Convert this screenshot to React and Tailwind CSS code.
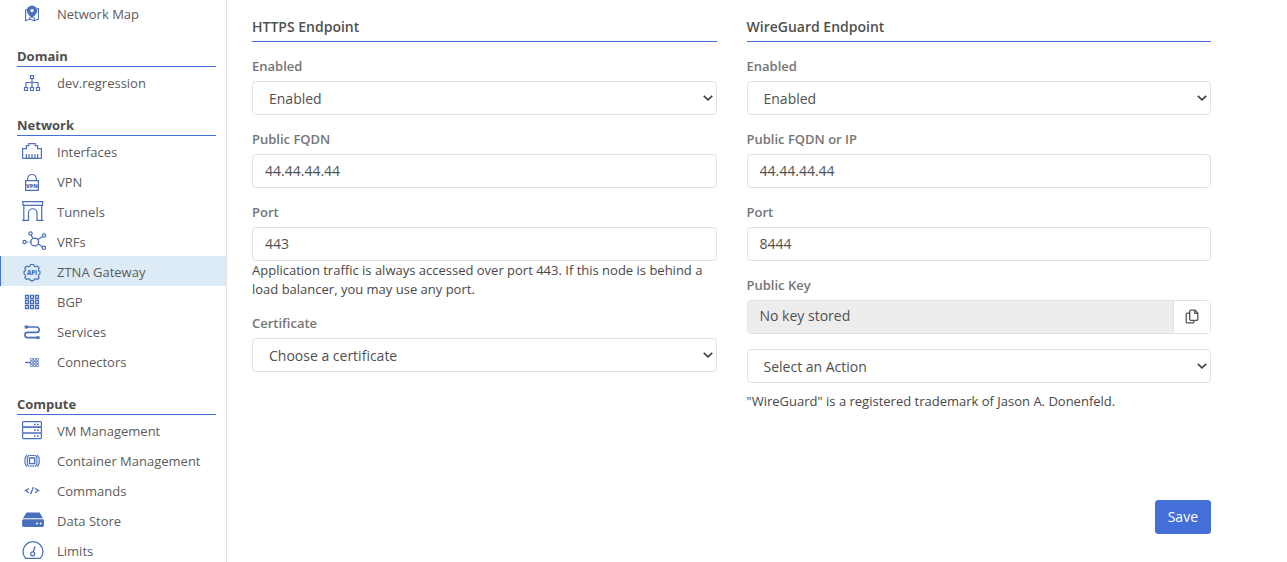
import React from "react";

/* Every sidebar glyph is drawn on the same 30 x 30 grid. */
function Glyph({ children }) {
  return (
    <svg
      viewBox="0 0 30 30"
      className="size-[30px] shrink-0 text-[#4a6fbd]"
      fill="none"
      stroke="currentColor"
      strokeWidth="1.2"
      aria-hidden="true"
    >
      {children}
    </svg>
  );
}

const glyphs = {
  map: (
    <Glyph>
      <path d="M10 11.500 8.600 12v10.700l4.200-1.600 4.400 1.600 4.200-1.600V10.500L20 11M12.800 19v2.600M17.200 19v4.200" strokeWidth="1.100" />
      <path
        d="M15 7.500a5.200 5.200 0 0 0-5.200 5.200c0 3 3.200 5.200 5.200 7.600 2-2.400 5.200-4.600 5.200-7.600A5.200 5.200 0 0 0 15 7.500zm0 3.400a1.700 1.700 0 1 1 0 3.400 1.700 1.700 0 0 1 0-3.400z"
        fill="currentColor"
        stroke="none"
      />
    </Glyph>
  ),
  tree: (
    <Glyph>
      <path d="M13.500 8.500h3v3h-3zM15 11.500v9M9 20.500v-5h12v5M7.500 20.500h3v3h-3zM13.500 20.500h3v3h-3zM19.500 20.500h3v3h-3z" />
    </Glyph>
  ),
  ethernet: (
    <Glyph>
      <path d="M5.600 22.400V12.600h3.800V9.700h2.400V7.600h6.400v2.100h2.400v2.900h3.800v9.800zM9.300 18v4.400M12.100 18v4.400M15 18v4.400M17.900 18v4.400M20.700 18v4.400" />
    </Glyph>
  ),
  lock: (
    <Glyph>
      <path d="M8.600 14.600h12.800v9.800H8.600zM10.700 14.600v-1.800a4.300 4.300 0 0 1 8.600 0v1.800" />
      <text x="15" y="21.800" fontSize="5.500" fontWeight="800" textAnchor="middle" fill="currentColor" stroke="none">
        VPN
      </text>
    </Glyph>
  ),
  arch: (
    <Glyph>
      <path d="M5 5.600h21.500M6 5.600v3.800h19.500V5.600M6.800 9.400v14.800M24.700 9.400v14.800M5 24.400h6.500V17a4.200 4.200 0 0 1 8.500 0v7.400h6.500" />
    </Glyph>
  ),
  hub: (
    <Glyph>
      <circle cx="17.700" cy="16" r="3.900" strokeWidth="1.400" />
      <circle cx="7.500" cy="16" r="1.600" />
      <circle cx="13.500" cy="7.500" r="1.700" />
      <circle cx="27" cy="9.500" r="1.600" />
      <circle cx="26.800" cy="21.800" r="1.700" />
      <path d="M9.500 16h1.800M12.400 16h1.400M14.200 9.200l1.700 3.300M21 13.600l4.600-3.100M21.200 18.100l4.200 2.700" />
    </Glyph>
  ),
  gear: (
    <Glyph>
      <path
        d="M13.400 8.500h3.200l.5 1.700 1.500.6 1.600-.8 2 2-.8 1.600.6 1.500 1 .5v2.200l-1 .6-.6 1.500.8 1.600-2 2-1.600-.8-1.500.6-.5 1.400h-3.200l-.5-1.400-1.500-.6-1.600.8-2-2 .8-1.600-.6-1.500-1-.6v-2.200l1-.5.6-1.500-.8-1.600 2-2 1.600.8 1.500-.6z"
        strokeLinejoin="round"
      />
      <text x="15" y="18.500" fontSize="6" fontWeight="800" textAnchor="middle" fill="currentColor" stroke="none">
        API
      </text>
    </Glyph>
  ),
  grid: (
    <Glyph>
      <path
        d="M8.500 9.500h3v3h-3zM13.500 9.500h3v3h-3zM18.500 9.500h3v3h-3zM8.500 14.500h3v3h-3zM13.500 14.500h3v3h-3zM18.500 14.500h3v3h-3zM8.500 19.500h3v3h-3zM13.500 19.500h3v3h-3zM18.500 19.500h3v3h-3z"
        strokeWidth="1.300"
      />
    </Glyph>
  ),
  route: (
    <Glyph>
      <path d="M9.500 11h10a2.700 2.700 0 0 1 0 5.400h-9a2.600 2.600 0 0 0 0 5.200h10" strokeWidth="1.600" />
      <path d="M7.700 9.600h3.200v2.800H7.700zM19.400 20.200h3.200v2.800h-3.200z" fill="currentColor" stroke="none" />
    </Glyph>
  ),
  connector: (
    <Glyph>
      <path d="M8 16.500h6" strokeWidth="1.300" />
      <path
        d="M13.500 12.500h2v2h-2zM16.500 12.500h2v2h-2zM19.500 12.500h2v2h-2zM13.500 15.500h2v2h-2zM16.500 15.500h2v2h-2zM19.500 15.500h2v2h-2zM13.500 18.500h2v2h-2zM16.500 18.500h2v2h-2zM19.500 18.500h2v2h-2z"
        strokeWidth=".7"
      />
    </Glyph>
  ),
  rack: (
    <Glyph>
      <rect x="5.600" y="6.600" width="18.800" height="5.600" rx="1" />
      <rect x="5.600" y="12.200" width="18.800" height="5.800" rx="1" />
      <rect x="5.600" y="18" width="18.800" height="5.600" rx="1" />
      <path d="M17 9.500h1.700M20 9.500h1.700M17 15.200h1.700M20 15.200h1.700M17 20.900h1.700M20 20.900h1.700" strokeWidth="1.500" />
    </Glyph>
  ),
  container: (
    <Glyph>
      <path d="M12.500 13h5.200v5.600h-5.200z" strokeWidth="1.400" />
      <path
        d="M12.500 10.500h5.200M12.500 21h5.200M12 10l-1.700 2.300v7l1.700 2.300M18.200 10l1.700 2.300v7l-1.700 2.300M9.700 9.800l-1.700 3.500v5l1.700 3.500M20.500 9.800l1.700 3.500v5l-1.700 3.500"
        strokeWidth="1.100"
      />
    </Glyph>
  ),
  code: (
    <Glyph>
      <path d="M12 13.500 8.500 15.600 12 17.700M18 13.500l3.500 2.100-3.500 2.100M16.500 12l-3 7.200" strokeWidth="1.300" />
    </Glyph>
  ),
  drive: (
    <Glyph>
      <path d="M9.500 7.500h13L26 13.300H6zM6.500 14.200h19c.8 0 1.400.6 1.400 1.400v4.600c0 1.100-.8 1.900-1.900 1.900H7a1.900 1.900 0 0 1-1.900-1.900v-4.600c0-.8.600-1.400 1.400-1.400z" fill="currentColor" stroke="none" />
      <circle cx="20" cy="18.400" r="1" fill="#fff" stroke="none" />
      <circle cx="23.600" cy="18.400" r="1" fill="#fff" stroke="none" />
    </Glyph>
  ),
  gauge: (
    <Glyph>
      <path d="M8.600 23.400a10 10 0 1 1 14.800 0z" strokeWidth="1.300" strokeLinejoin="round" />
      <circle cx="15.700" cy="18.800" r="2" />
      <path d="M16.300 16.900 18 11.500" strokeWidth="1.400" />
    </Glyph>
  ),
};

const sections = [
  { title: "Domain", items: [["tree", "dev.regression"]] },
  {
    title: "Network",
    items: [
      ["ethernet", "Interfaces"],
      ["lock", "VPN"],
      ["arch", "Tunnels"],
      ["hub", "VRFs"],
      ["gear", "ZTNA Gateway"],
      ["grid", "BGP"],
      ["route", "Services"],
      ["connector", "Connectors"],
    ],
  },
  {
    title: "Compute",
    items: [
      ["rack", "VM Management"],
      ["container", "Container Management"],
      ["code", "Commands"],
      ["drive", "Data Store"],
      ["gauge", "Limits"],
    ],
  },
];

function NavItem({ icon, label, active }) {
  return (
    <li>
      <a
        href="#"
        aria-current={active ? "page" : undefined}
        className={
          "flex h-[30px] items-center gap-[10px] border-l pl-4 text-[13px] leading-5 text-[#5c5c5c] " +
          (active ? "border-[#446fd8] bg-[#dcebf5]" : "border-transparent")
        }
      >
        {glyphs[icon]}
        <span className="pt-px">{label}</span>
      </a>
    </li>
  );
}

function Sidebar() {
  return (
    <nav className="w-[227px] shrink-0 overflow-hidden border-r border-[#e3e3e3]">
      <ul className="-mt-[2px]">
        <NavItem icon="map" label="Network Map" />
      </ul>
      {sections.map((section) => (
        <section key={section.title}>
          <h2 className="mr-[10px] ml-[17px] flex h-[39px] items-end border-b border-[#446fd8] text-[13px] leading-5 font-bold text-[#4f4f4f]">
            {section.title}
          </h2>
          <ul>
            {section.items.map(([icon, label]) => (
              <NavItem key={label} icon={icon} label={label} active={label === "ZTNA Gateway"} />
            ))}
          </ul>
        </section>
      ))}
    </nav>
  );
}

const control =
  "block h-[34px] w-full rounded-[4px] border border-[#e2e2e2] bg-white text-[14px] leading-5 text-[#505050] outline-none";

function Label({ htmlFor, children }) {
  return (
    <label htmlFor={htmlFor} className="mb-[5px] block text-[13px] leading-[19px] font-semibold text-[#757575]">
      {children}
    </label>
  );
}

function Select({ id, value, ...rest }) {
  return (
    <div className="relative">
      <select id={id} className={control + " appearance-none pt-[2px] pr-8 pl-4"} {...rest}>
        <option>{value}</option>
      </select>
      <svg
        viewBox="0 0 10 6"
        className="pointer-events-none absolute top-[14px] right-1 h-[6px] w-[10px]"
        fill="none"
        stroke="#484848"
        strokeWidth="1.800"
        aria-hidden="true"
      >
        <path d="M.8.8 5 4.800 9.200.8" />
      </svg>
    </div>
  );
}

function SelectField({ id, label, value }) {
  return (
    <div>
      <Label htmlFor={id}>{label}</Label>
      <Select id={id} value={value} />
    </div>
  );
}

function TextField({ id, label, value, help }) {
  return (
    <div>
      <Label htmlFor={id}>{label}</Label>
      <input id={id} type="text" defaultValue={value} className={control + " px-3 pb-[2px]"} />
      {help && <p className="text-[13px] leading-[19px] text-[#484848]">{help}</p>}
    </div>
  );
}

function Column({ title, children }) {
  return (
    <section className="min-w-0">
      <h2 className="mb-[15px] border-b border-[#446fd8] pb-1 text-[14px] leading-5 font-semibold text-[#505050]">
        {title}
      </h2>
      <div className="flex flex-col gap-[15px]">{children}</div>
    </section>
  );
}

export default function App() {
  return (
    <div className="flex h-screen overflow-hidden bg-white font-['Open_Sans',sans-serif]">
      <Sidebar />
      <main className="min-w-0 flex-1 pt-[17px] pr-[76px] pl-[25px]">
        <form onSubmit={(event) => event.preventDefault()}>
          <div className="grid grid-cols-2 gap-[30px]">
            <Column title="HTTPS Endpoint">
              <SelectField id="https-enabled" label="Enabled" value="Enabled" />
              <TextField id="https-fqdn" label="Public FQDN" value="44.44.44.44" />
              <TextField
                id="https-port"
                label="Port"
                value="443"
                help="Application traffic is always accessed over port 443. If this node is behind a load balancer, you may use any port."
              />
              <SelectField id="https-certificate" label="Certificate" value="Choose a certificate" />
            </Column>
            <Column title="WireGuard Endpoint">
              <SelectField id="wg-enabled" label="Enabled" value="Enabled" />
              <TextField id="wg-fqdn" label="Public FQDN or IP" value="44.44.44.44" />
              <TextField id="wg-port" label="Port" value="8444" />
              <div>
                <Label htmlFor="wg-key">Public Key</Label>
                <div className="flex h-[34px] overflow-hidden rounded-[4px] border border-[#e2e2e2]">
                  <input
                    id="wg-key"
                    type="text"
                    readOnly
                    value="No key stored"
                    className="min-w-0 flex-1 bg-[#ededed] px-3 pb-[2px] text-[14px] leading-5 text-[#505050] outline-none"
                  />
                  <button
                    type="button"
                    aria-label="Copy public key"
                    className="flex w-[37px] items-center justify-center border-l border-[#e2e2e2] bg-white"
                  >
                    <svg viewBox="0 0 14 16" className="h-4 w-[14px]" fill="none" stroke="#555" strokeWidth="1.300" strokeLinejoin="round" aria-hidden="true">
                      <path d="M5.700 1.200h4.300l2.800 2.800v6.300a1 1 0 0 1-1 1H5.700a1 1 0 0 1-1-1V2.200a1 1 0 0 1 1-1zM9.600 1.400v2.900h3M4.400 4.200H2.200a1 1 0 0 0-1 1v7.700a1 1 0 0 0 1 1h5.600a1 1 0 0 0 1-1v-1.500" />
                    </svg>
                  </button>
                </div>
              </div>
              <div>
                <Select id="wg-action" value="Select an Action" aria-label="Action" />
                <p className="mt-[9px] text-[13px] leading-[19px] text-[#484848]">
                  "WireGuard" is a registered trademark of Jason A. Donenfeld.
                </p>
              </div>
            </Column>
          </div>
          <div className="mt-[89px] flex justify-end">
            <button
              type="submit"
              className="h-[34px] rounded-[3px] border border-[#446fd8] bg-[#446fd8] px-3 text-[14px] leading-5 font-medium text-white"
            >
              Save
            </button>
          </div>
        </form>
      </main>
    </div>
  );
}
